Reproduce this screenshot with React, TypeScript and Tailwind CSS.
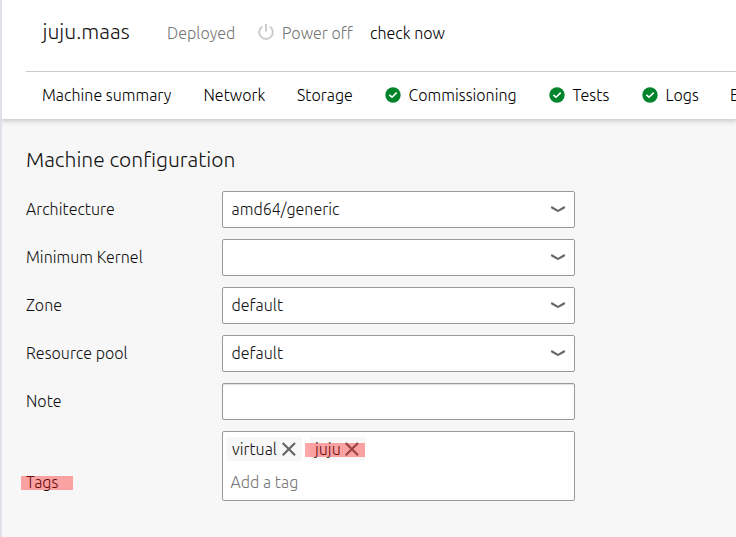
import type { ReactNode } from "react";

function Check() {
  return (
    <svg className="mr-2 size-4 shrink-0" viewBox="0 0 16 16">
      <circle cx="8" cy="8" r="7.7" fill="#00842b" />
      <path d="M4.3 7.8 7 10.2 11.7 5.6" fill="none" stroke="#fff" strokeWidth="1.6" />
    </svg>
  );
}

function Close() {
  return (
    <svg className="size-4 shrink-0" viewBox="0 0 16 16">
      <path d="M1.7 2 14 14.3M14 2 1.7 14.3" fill="none" stroke="#666" strokeWidth="2.2" />
    </svg>
  );
}

function Row({ label, children }: { label: string; children: ReactNode }) {
  return (
    <div className="flex h-[37px] items-center">
      <div className="w-[196px] shrink-0 pb-0.5">{label}</div>
      {children}
    </div>
  );
}

function Select({ value }: { value: string }) {
  return (
    <div className="flex h-[37px] w-[353px] items-center justify-between rounded-[2px] border border-[#999] bg-white pr-2 pb-0.5 pl-[8.5px]">
      <span>{value}</span>
      <svg className="size-4" viewBox="0 0 16 16">
        <path d="M1.2 6 Q4.5 7.8 8 10 Q11.5 7.8 14.8 6" fill="none" stroke="#666" strokeWidth="2" />
      </svg>
    </div>
  );
}

export default function App() {
  return (
    <div className="h-[537px] w-[736px] overflow-hidden border-l-2 border-[#dee2e8] bg-[#f7f7f7] font-['Ubuntu','Open_Sans',sans-serif] text-[16px] leading-6 font-light tracking-[0.03px] whitespace-nowrap text-[#111]">
      <header className="relative h-[119px] bg-white pl-6 shadow-[0_1px_5px_1px_rgba(0,0,0,0.2)]">
        <div className="flex h-[71px] items-center pb-1.5 pl-4">
          <h1 className="w-[125px] pb-1 pl-[0.5px] text-[21px] font-light">juju.maas</h1>
          <span className="w-[91px] text-[#757575]">Deployed</span>
          <svg className="relative -top-px mr-2 size-4" viewBox="0 0 16 16">
            <path d="M4.2 2.5A6.8 6.8 0 1 0 11.8 2.5M8 0V7.5" fill="none" stroke="#ccc" strokeWidth="2" />
          </svg>
          <span className="w-[88px] text-[#757575]">Power off</span>
          <span className="text-black">check now</span>
        </div>
        <nav className="flex h-12 items-center border-t border-[#ccc] pb-0.5 pl-4 text-black">
          <span className="w-[161.5px] shrink-0">Machine summary</span>
          <span className="w-[93.5px] shrink-0">Network</span>
          <span className="w-[87.5px] shrink-0">Storage</span>
          <span className="flex w-[164px] shrink-0 items-center"><Check />Commissioning</span>
          <span className="flex w-[93px] shrink-0 items-center"><Check />Tests</span>
          <span className="flex w-[88.5px] shrink-0 items-center"><Check />Logs</span>
          <span>Events</span>
        </nav>
      </header>
      <main className="pt-[27px] pl-6">
        <h2 className="mb-[12px] h-[33px] text-[21px] leading-[26px] font-light tracking-normal">Machine configuration</h2>
        <div className="flex flex-col gap-[11px]">
          <Row label="Architecture"><Select value="amd64/generic" /></Row>
          <Row label="Minimum Kernel"><Select value="" /></Row>
          <Row label="Zone"><Select value="default" /></Row>
          <Row label="Resource pool"><Select value="default" /></Row>
          <Row label="Note">
            <div className="h-[37px] w-[353px] rounded-[2px] border border-[#999] bg-white shadow-[inset_0_1px_1px_rgba(0,0,0,0.12)]" />
          </Row>
          <div className="flex h-[70px]">
            <div className="w-[196px] shrink-0 pt-[39px]">
              <span className="relative">Tags
                <span className="absolute top-[3px] -left-[5px] h-[14px] w-[52px] bg-[#ff0000]/35" />
              </span>
            </div>
            <div className="h-[70px] w-[353px] rounded-[2px] border border-[#999] bg-white pt-[5px] pl-1">
              <div className="flex gap-2">
                <span className="flex h-6 w-[75px] items-center justify-between bg-[#f7f7f7] pr-[5px] pl-[5px]">virtual<Close /></span>
                <span className="relative flex h-6 w-[55px] items-center justify-between bg-[#f7f7f7] pr-[5px] pl-[5px]">juju<Close />
                  <span className="absolute top-1.5 -left-[5px] h-[14px] w-[60px] bg-[#ff0000]/35" />
                </span>
              </div>
              <div className="mt-[9px] pl-[3.5px] text-[#757575]">Add a tag</div>
            </div>
          </div>
        </div>
      </main>
    </div>
  );
}
